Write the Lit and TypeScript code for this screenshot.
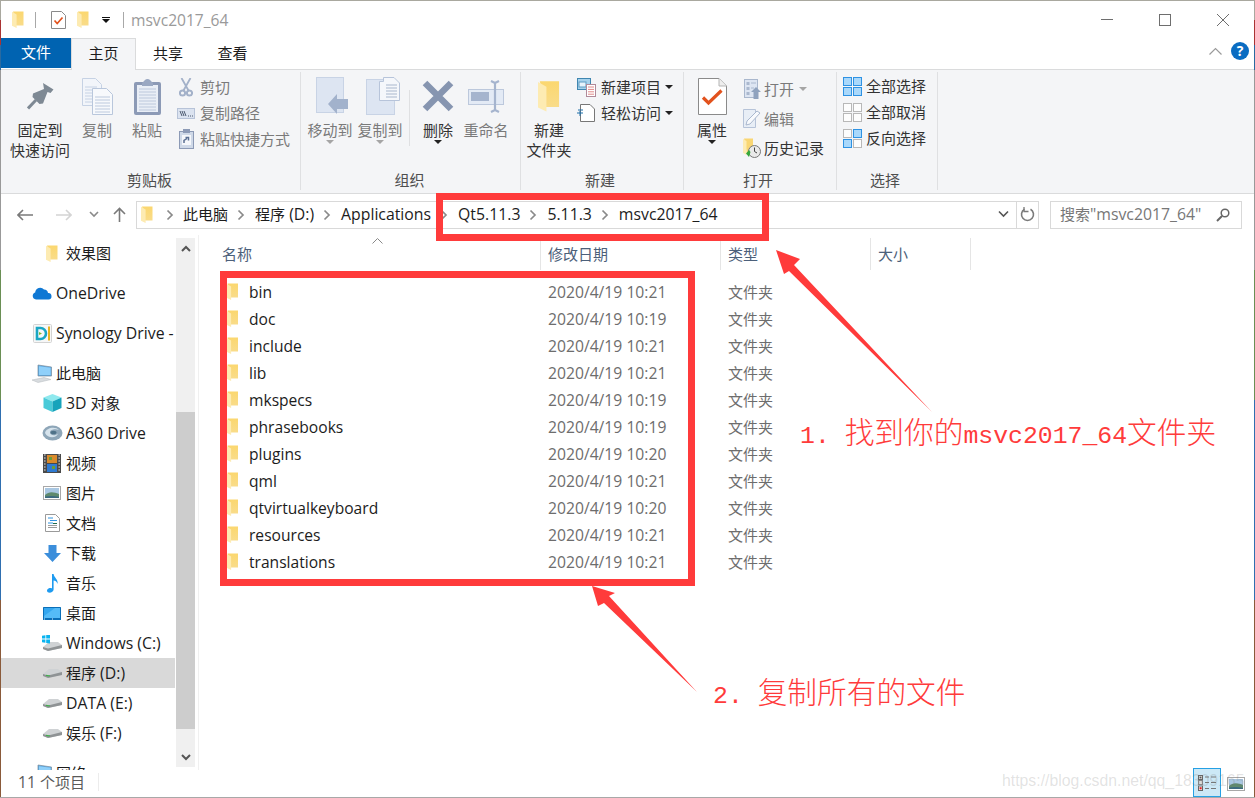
import { LitElement, html, css, svg, nothing } from "lit";
import { customElement } from "lit/decorators.js";

const tx = (s: string) =>
  s.split(/([\u3000-\u9fff]+)/).map((p, i) => (i % 2 ? html`<span class="c">${p}</span>` : p));

const folder = (w = 12, h = 17) => html`<svg width=${w} height=${h} viewBox="0 0 12 17">
  <defs><linearGradient id="fg" x1="0" y1="0" x2="0" y2="1"><stop offset="0" stop-color="#fbd76f"/><stop offset="1" stop-color="#f9dc8a"/></linearGradient></defs>
  <path d="M1 .5H11.5V14.5H4Z" fill="url(#fg)"/>
  <path d="M0 .8L4.6 3.4V17L0 14.8Z" fill="#fdebb2"/>
</svg>`;

const chk = html`<svg width="15" height="18" viewBox="0 0 15 18"><path d="M.5.5H10.5L14.5 4.5V17.5H.5Z" fill="#fff" stroke="#8a8a8a"/><path d="M3.5 9.5L6.2 12.5L11.5 6.5" fill="none" stroke="#e2521d" stroke-width="1.7"/></svg>`;

const docLines = (x: number, y: number, w: number, n: number, c: string, step = 3) =>
  Array.from({ length: n }, (_, i) => svg`<path d="M${x} ${y + i * step}h${w}" stroke=${c}/>`);

const I: Record<string, any> = {
  pin: html`<svg width="27" height="27" viewBox="0 0 27 27"><path d="M16 0L26.5 6.5L23.5 10L20.5 9L16 20.5L12.5 21L5.5 14L6 10.5L17 6Z" fill="#7e8994"/><path d="M9 17L1 25.5" stroke="#7e8994" stroke-width="3"/></svg>`,
  copy: html`<svg width="31" height="37" viewBox="0 0 31 37"><path d="M.5.5H13.5L19.5 6.5V27.5H.5Z" fill="#f2f5fa" stroke="#c6d2e4"/>${docLines(3, 9, 12, 6, "#c6d2e4")}<path d="M10.5 10.5H24.5L30.5 16.5V36.5H10.5Z" fill="#f7f9fc" stroke="#b9c7dc"/>${docLines(13, 19, 15, 6, "#bcc9dd")}</svg>`,
  paste: html`<svg width="27" height="37" viewBox="0 0 27 37"><rect x="0" y="4" width="27" height="33" rx="2" fill="#8c9ab6"/><rect x="3" y="7" width="21" height="27" fill="#e9eef6"/>${docLines(5, 11, 17, 8, "#bcc8dc")}<path d="M8 5L11 2A3 2 0 0 1 16 2L19 5V8H8Z" fill="#9aa8c2"/></svg>`,
  scissors: html`<svg width="14" height="19" viewBox="0 0 14 19" fill="none" stroke="#a3b1c9" stroke-width="1.8"><path d="M2.5 0L9.5 12.5M11.5 0L4.5 12.5"/><circle cx="3.5" cy="15" r="2.6" stroke-width="2"/><circle cx="10.5" cy="15" r="2.6" stroke-width="2"/></svg>`,
  cpath: html`<svg width="18" height="11" viewBox="0 0 18 11"><rect x=".5" y=".5" width="17" height="10" fill="#dbe3f0" stroke="#b7c3d8"/><path d="M3 3L5 8M5 3L7 8M7 3L9 8M11 8h1M13 8h1M15 8h1" stroke="#4c5a70" fill="none"/></svg>`,
  pshort: html`<svg width="15" height="20" viewBox="0 0 15 20"><rect x=".5" y="2.5" width="14" height="17" fill="#cfd9e8" stroke="#8c9ab6"/><rect x="4" y="0" width="7" height="4" fill="#8c9ab6"/><rect x="3" y="6" width="9" height="10" fill="#f5f7fb"/><path d="M5 14V11.5L8 9.5M6.5 8.5H9.5V11.5" fill="none" stroke="#5a6f93" stroke-width="1.5"/></svg>`,
  move: html`<svg width="37" height="38" viewBox="-4 0 37 38"><rect x=".5" y=".5" width="27" height="35" fill="#dde5f2" stroke="#c8d3e5"/><path d="M12 27L21 17V22H32V32H21V37Z" fill="#a2b2cc"/></svg>`,
  copyto: html`<svg width="40" height="39" viewBox="-6 0 40 39"><rect x=".5" y="2.5" width="28" height="35" fill="#dde5f2" stroke="#c8d3e5"/><path d="M13.5 4.5H17.5V.5H28L33.5 6V23.5H13.5Z" fill="#f5f7fb" stroke="#b7c4da"/>${docLines(20, 8, 11, 5, "#a9b7cd")}</svg>`,
  del: html`<svg width="32" height="32" viewBox="0 0 32 32"><path d="M3 3L29 29M29 3L3 29" stroke="#8695b0" stroke-width="6.5"/></svg>`,
  rename: html`<svg width="36" height="33" viewBox="0 0 36 33"><rect x=".5" y="9.5" width="35" height="15" fill="#e3eaf5" stroke="#bcc8dc"/><rect x="3" y="12" width="18" height="9" fill="#a5b4ce"/><path d="M23 1L27 3L31 1M27 3V30M23 32L27 30L31 32" fill="none" stroke="#a5b4ce" stroke-width="2.2"/></svg>`,
  newitem: html`<svg width="19" height="19" viewBox="0 0 19 19"><rect x=".5" y=".5" width="13" height="11" fill="#a6d2ec" stroke="#3f86b0"/><rect x="2" y="4" width="7" height="5" fill="#e7f3fb" stroke="#5d9cc2"/><rect x="9.5" y="6.5" width="9" height="12" fill="#fff" stroke="#b08a9a"/>${docLines(11, 9, 6, 4, "#e08a8a", 2.4)}</svg>`,
  easy: html`<svg width="18" height="18" viewBox="0 0 18 18"><path d="M3.5.5H13L17.5 5V17.5H3.5Z" fill="#fff" stroke="#777"/><path d="M1 6H6M0 9H6M3 7V12" stroke="#1f6fa8" fill="none"/></svg>`,
  props: html`<svg width="29" height="37" viewBox="0 0 29 37"><path d="M.5.5H21L28.5 8V36.5H.5Z" fill="#fff" stroke="#8a8a8a"/><path d="M21 .5V8H28.5" fill="#eee" stroke="#b5b5b5"/><path d="M5 19.5L10.5 25L23.5 12.5" fill="none" stroke="#e2521d" stroke-width="3.2"/></svg>`,
  open: html`<svg width="17" height="20" viewBox="0 0 17 20"><rect x=".5" y=".5" width="13" height="18" fill="#dde5f2" stroke="#a9b7cd"/><path d="M2.5 3h3v3h-3zM2.5 8h3v3h-3zM2.5 13h3v3h-3z" fill="#aab8ce"/><path d="M7 4h5M7 9h3" stroke="#aab8ce"/><path d="M12 8L17 13H14.5V20H9.5V13H7Z" fill="#8fa2be"/></svg>`,
  edit: html`<svg width="18" height="19" viewBox="0 0 18 19"><path d="M.5.5H12.5V18.5H.5Z" fill="#e8eef6" stroke="#b6c3d8"/><path d="M3 16L4 12L14 2L17 4L7 15Z" fill="#f8fafd" stroke="#aab8ce"/></svg>`,
  hist: html`<svg width="18" height="20" viewBox="0 0 18 20"><path d="M1 .5H10V16H4Z" fill="#f9d673"/><path d="M0 1L3.5 3V17L0 15Z" fill="#fdebb2"/><circle cx="11.5" cy="13.5" r="6" fill="#e9e9e9" stroke="#777"/><path d="M11.5 9.5V13.5L14 15" stroke="#444" fill="none"/><path d="M3 15.5L6 12L7.5 14L6 19Z" fill="#36a83a"/></svg>`,
  cloud: html`<svg width="20" height="14" viewBox="0 0 20 14"><path d="M4 13.5A3.6 3.6 0 0 1 3.2 6.5A5 5 0 0 1 12 3.5A4 4 0 0 1 16 7A3.2 3.2 0 0 1 16.5 13.5Z" fill="#0f78d4"/></svg>`,
  syn: html`<svg width="19" height="19" viewBox="0 0 19 19"><rect x=".5" y=".5" width="18" height="18" rx="1" fill="#f7f7f7" stroke="#d3d3d3"/><path d="M4 4H7.5A5.5 5.5 0 0 1 7.5 15H4Z" fill="none" stroke="#1aa7c4" stroke-width="2.6"/><path d="M6 8L9 9.5L6 11Z" fill="#7dbb2c"/><path d="M16 2.5V16.5" stroke="#e9b321" stroke-width="2"/></svg>`,
  pc: html`<svg width="20" height="19" viewBox="0 0 20 19"><path d="M6 1L19.5 3V12L6 12Z" fill="#5aa9e4" stroke="#7a8b9a" stroke-width=".7"/><path d="M7 2.2L18.6 3.8V11H7Z" fill="#8fd0fa"/><path d="M0 16L12 13.5L19 15.5L6 18.5Z" fill="#d8dcdf" stroke="#b3b8bc" stroke-width=".5"/></svg>`,
  cube: html`<svg width="19" height="18" viewBox="0 0 19 18"><path d="M9.5 0L18.5 3.5L9.5 7.5L.5 3.5Z" fill="#8fe9ee"/><path d="M.5 3.5L9.5 7.5V18L.5 14Z" fill="#49cad8"/><path d="M18.5 3.5V14L9.5 18V7.5Z" fill="#17a3bb"/></svg>`,
  a360: html`<svg width="21" height="16" viewBox="0 0 21 16"><ellipse cx="10.5" cy="8" rx="10" ry="7.5" fill="#8ea6b8"/><path d="M3 8C4 3 13 1 17 5C14 3.5 8 4 8 7.5C8 11 14 11 16 8.5C15 13 6 14 3 8Z" fill="#d6e3ec"/><ellipse cx="11.5" cy="7.5" rx="3" ry="1.8" fill="#4f7288"/></svg>`,
  video: html`<svg width="18" height="19" viewBox="0 0 18 19"><rect width="18" height="19" fill="#4a4a4a"/>${[1, 4, 7, 10, 13, 16].map((y) => svg`<path d="M1 ${y}h1.6M15.4 ${y}h1.6" stroke="#ddd"/>`)}<rect x="4" y="1" width="10" height="8" fill="#d98a2b"/><rect x="4" y="10" width="10" height="8" fill="#2f7ad1"/><path d="M6 3h3v3H6zM9 12h3v3H9z" fill="#6a9c3a"/></svg>`,
  pic: html`<svg width="18" height="14" viewBox="0 0 18 14"><rect x=".5" y=".5" width="17" height="13" fill="#fff" stroke="#a8a8a8"/><rect x="2" y="2" width="14" height="10" fill="#a9c7e2"/><path d="M2 9C6 5 11 6 16 8V12H2Z" fill="#5f8a6e"/><path d="M2 10.5C7 9.5 12 10 16 11V12H2Z" fill="#3c6a80"/></svg>`,
  docs: html`<svg width="15" height="18" viewBox="0 0 15 18"><path d="M.5.5H10.5L14.5 4.5V17.5H.5Z" fill="#fff" stroke="#9a9a9a"/><path d="M3 4H8M5 6.5H12M3 9H8" stroke="#2f93e0"/><path d="M3 11.5H12M3 13.5H12" stroke="#9a9a9a"/><path d="M8 9.5h4" stroke="#1c6b4a"/></svg>`,
  dl: html`<svg width="17" height="17" viewBox="0 0 17 17"><path d="M4.5 0H12.5V8H17L8.5 17L0 8H4.5Z" fill="#3b8edb"/></svg>`,
  music: html`<svg width="13" height="19" viewBox="0 0 13 19"><path d="M6 0H7.6C8 4 12.5 5 11.5 10C11 7.5 9 6.5 7.6 6.5V15.5C7.6 18 4.5 19 2.5 18.5C.5 18 .5 15.5 2.5 14.5C4 13.8 5.2 14 6 14.5Z" fill="#1e9bf0"/></svg>`,
  desk: html`<svg width="18" height="13" viewBox="0 0 18 13"><rect width="18" height="13" rx=".5" fill="#0b6fb8"/><path d="M1 1H17V11H1Z" fill="#35a7ef"/><path d="M1 9L12 1H17V11H1Z" fill="#55bbf7"/><path d="M1 12H17" stroke="#dff1fc" stroke-dasharray="1 7"/></svg>`,
  drive: html`<svg width="19" height="10" viewBox="0 0 19 10"><path d="M0 6L6 1H15L19 4V7L5 10L0 8Z" fill="#cfd2d4"/><path d="M0 6L5 7.5L19 4V7L5 10L0 8Z" fill="#8f9395"/><path d="M3 7.4L7 8" stroke="#3fb24a" stroke-width="1.2"/></svg>`,
  cdrive: html`<svg width="20" height="16" viewBox="0 0 20 16"><path d="M1 12L7 7H16L20 10V13L6 16L1 14Z" fill="#cfd2d4"/><path d="M1 12L6 13.5L20 10V13L6 16L1 14Z" fill="#8f9395"/><path d="M0 .8L3.4 .2V3.6H0ZM4.2 0L8 -.5V3.6H4.2ZM0 4.4H3.4V7.8L0 7.2ZM4.2 4.4H8V8.5L4.2 8Z" fill="#0ab4f0"/></svg>`,
  details: html`<svg width="18" height="16" viewBox="0 0 18 16"><rect x=".5" y=".5" width="4" height="4" fill="#fff" stroke="#666"/><rect x=".5" y="5.5" width="4" height="4" fill="#ddd" stroke="#888"/><rect x=".5" y="11" width="4" height="4.5" fill="#fff" stroke="#666"/><rect x="1.5" y="12.2" width="2.2" height="2.2" fill="#d22"/><rect x="1.5" y="1.5" width="2" height="2" fill="#555"/><path d="M7 2h4M13 2h5M7 7.5h4M13 7.5h5M7 13.5h4M13 13.5h5" stroke="#777"/></svg>`,
};

const squares = (on: boolean[]) => html`<svg width="19" height="19" viewBox="0 0 19 19">
  ${[[0, 0], [10, 0], [0, 10], [10, 10]].map(([x, y], i) => svg`<rect x=${x + 0.5} y=${y + 0.5} width="8" height="8" fill=${on[i] ? "#a9d8fb" : "#fdfdfd"} stroke=${on[i] ? "#2e92e3" : "#b8b8b8"}/>`)}
</svg>`;

const files: [string, string][] = [
  ["bin", "10:21"], ["doc", "10:19"], ["include", "10:21"], ["lib", "10:21"], ["mkspecs", "10:19"],
  ["phrasebooks", "10:19"], ["plugins", "10:20"], ["qml", "10:21"], ["qtvirtualkeyboard", "10:20"],
  ["resources", "10:21"], ["translations", "10:21"],
];

const nav: { t: string; i: any; l?: number; sel?: boolean; gap?: boolean }[] = [
  { t: "效果图", i: folder(12, 17), l: 2, gap: true },
  { t: "OneDrive", i: I.cloud, l: 1, gap: true },
  { t: "Synology Drive - ", i: I.syn, l: 1, gap: true },
  { t: "此电脑", i: I.pc, l: 1 },
  { t: "3D 对象", i: I.cube, l: 2 },
  { t: "A360 Drive", i: I.a360, l: 2 },
  { t: "视频", i: I.video, l: 2 },
  { t: "图片", i: I.pic, l: 2 },
  { t: "文档", i: I.docs, l: 2 },
  { t: "下载", i: I.dl, l: 2 },
  { t: "音乐", i: I.music, l: 2 },
  { t: "桌面", i: I.desk, l: 2 },
  { t: "Windows (C:)", i: I.cdrive, l: 2 },
  { t: "程序 (D:)", i: I.drive, l: 2, sel: true },
  { t: "DATA (E:)", i: I.drive, l: 2 },
  { t: "娱乐 (F:)", i: I.drive, l: 2, gap: true },
  { t: "网络", i: I.pc, l: 1 },
];

@customElement("app-root")
export class AppRoot extends LitElement {
  static styles = css`
    :host {
      display: block; width: 1255px; height: 798px; position: relative; overflow: hidden;
      background: linear-gradient(#a9a89f 0 20px, #a33 20px 45px, #2a6aa0 45px 70px, #999 70px 270px, #6a8f55 270px 400px, #2f6fb0 400px 600px, #8a5a3a 600px 797px, #a8a8a8 797px);
      font-family: "Open Sans", "Noto Sans CJK SC", sans-serif;
      font-size: 15.6px; color: #1c1c1c;
    }
    .c { font-size: 15px; font-family: "Noto Sans CJK SC", sans-serif; }
    svg { display: block; flex: none; }
    .win {
      margin: 1px 1px 1px 1px; height: 796px; background: #fff; display: flex; flex-direction: column;
      position: relative;
    }
    .title { height: 37px; display: flex; align-items: center; padding-left: 11px; flex: none; }
    .vsep { width: 1px; height: 16px; background: #a8a8a8; }
    .m11 { margin-left: 11px; } .m15 { margin-left: 15px; } .m12 { margin-left: 12px; } .m13 { margin-left: 13px; }
    .ttl { margin-left: 7px; color: #9a9a9a; line-height: 20px; }
    .ddq { width: 8px; margin-left: 13px; display: flex; flex-direction: column; gap: 1px; align-items: center; }
    .ddq i { display: block; width: 8px; height: 1px; background: #111; }
    .ddq b { display: block; border: 4px solid transparent; border-top-color: #111; border-bottom: 0; }
    .wc { margin-left: auto; display: flex; padding-right: 2px; }
    .wc div { width: 58px; height: 24px; display: flex; align-items: center; justify-content: center; }

    .tabs { height: 31px; display: flex; flex: none; align-items: flex-start; }
    .tab { width: 65px; height: 30px; line-height: 30px; text-align: center; color: #1c1c1c; }
    .tab.file { width: 70px; background: #0063b1; color: #fff; line-height: 28px; }
    .tab.home {
      height: 32px; line-height: 28px; background: #f4f5f7; border: 1px solid #dadbdc; border-bottom: 0;
      box-sizing: border-box; position: relative; z-index: 1;
    }
    .tab.sh { width: 64px; }
    .tabs .r { margin-left: auto; display: flex; align-items: center; gap: 9px; padding: 4px 5px 0 0; }
    .help { width: 18px; height: 18px; border-radius: 50%; background: #0a6cc2; color: #fff; font-size: 14px; font-weight: 700; line-height: 18px; text-align: center; }

    .ribbon {
      height: 125px; box-sizing: border-box; border-top: 1px solid #dadbdc; border-bottom: 1px solid #dadbdc;
      background: #f4f5f7; display: flex; padding: 2px 0 3px; flex: none;
    }
    .g { display: flex; flex-direction: column; border-right: 1px solid #dfe0e2; box-sizing: border-box; height: 118px; }
    .g1 { width: 300px; } .g2 { width: 220px; } .g3 { width: 163px; } .g4 { width: 153px; } .g5 { width: 101px; }
    .gc { flex: 1; display: flex; min-height: 0; }
    .gl { height: 20px; line-height: 20px; text-align: center; color: #4e4e4e; }
    .g1 .gl, .g2 .gl { padding-right: 2px; }
    .g3 .gl, .g4 .gl, .g5 .gl { padding-right: 4px; }
    .g1 .gc { padding-left: 9px; } .g2 .gc { padding-left: 4px; } .g3 .gc { padding-left: 3px; } .g4 .gc { padding-left: 4px; } .g5 .gc { padding-left: 6px; }
    .big { display: flex; flex-direction: column; align-items: center; color: #7a7a7a; text-align: center; line-height: 20px; flex: none; }
    .big.on, .sm.on { color: #333; }
    .big .ic { height: 48px; display: flex; align-items: center; justify-content: center; }
    .w60 { width: 60px; } .w54 { width: 54px; } .w46 { width: 46px; } .w50 { width: 50px; } .w48 { width: 48px; }
    .drop { border: 4px solid transparent; border-top-color: #222; border-bottom: 0; width: 0; }
    .drop.off { border-top-color: #a5a5a5; }
    .bsep { width: 1px; height: 56px; background: #dfe0e2; margin: 18px 5px 0 4px; flex: none; }
    .sc { display: flex; flex-direction: column; padding-top: 2px; flex: none; }
    .sc.p1 { padding-top: 1px; }
    .sc.p2 { padding-top: 2px; }
    .sm { display: flex; align-items: center; height: 26px; color: #7a7a7a; gap: 5px; }
    .sc.r30 .sm { height: 29.7px; }
    .smi { width: 18px; display: flex; justify-content: center; flex: none; }
    .x7 { margin-left: 7px; } .x3 { margin-left: 3px; }
    .sm.gap6 { gap: 6px; } .sm.gap3 { gap: 3px; }
    .sm.gap3 .drop { margin-left: 2px; }
    .sm.gap6 .drop { margin-left: -2px; }

    .addr { height: 41px; display: flex; align-items: center; flex: none; font-size: 15.8px; }
    .nb { display: flex; justify-content: center; align-items: center; height: 27px; }
    .n47 { width: 47px; } .n31 { width: 31px; } .n29 { width: 29px; } .n22 { width: 22px; margin-right: 6px; }
    .path {
      width: 880px; height: 28px; box-sizing: border-box; border: 1px solid #d9d9d9; border-right: 0;
      display: flex; align-items: center; padding-left: 4px; position: relative;
    }
    .path span, .search span { padding-bottom: 2px; }
    .chev { width: 8px; margin: 0 10px 0 9px; flex: none; }
    .chev.first { margin-left: 13px; margin-right: 9px; }
    .ddn { position: absolute; right: 7px; top: 8px; }
    .ref {
      width: 23px; height: 28px; box-sizing: border-box; border: 1px solid #d9d9d9;
      display: flex; align-items: center; justify-content: center;
    }
    .search {
      margin-left: 11px; width: 192px; height: 28px; box-sizing: border-box; border: 1px solid #d9d9d9;
      display: flex; align-items: center; justify-content: space-between; padding: 0 11px 0 9px; color: #777;
    }

    .body { flex: 1; display: flex; min-height: 0; }
    .side { width: 174px; padding-top: 3px; overflow: hidden; flex: none; box-sizing: border-box; font-size: 15.8px; }
    .nr { display: flex; align-items: center; height: 30px; white-space: nowrap; color: #1c1c1c; overflow: hidden; }
    .nr.l1 { padding-left: 31px; } .nr.l2 { padding-left: 41px; }
    .nr.gap { margin-bottom: 10px; }
    .nr.sel { background: #d9d9d9; }
    .nic { width: 20px; margin-right: 4px; display: flex; justify-content: center; flex: none; }
    .sb { width: 19px; margin: 3px 0 3px 1px; background: #f0f0f0; flex: none; display: flex; flex-direction: column; }
    .sb .a { height: 174px; display: flex; justify-content: center; padding-top: 7px; box-sizing: border-box; }
    .sb .t { height: 317px; background: #cdcdcd; flex: none; }
    .sb .b { flex: 1; display: flex; justify-content: center; align-items: flex-end; padding-bottom: 6px; }
    .main { margin-left: 3px; border-left: 1px solid #f0f0f0; flex: 1; padding-top: 3px; min-width: 0; }
    .hdr { display: flex; height: 32px; padding-left: 15px; color: #4c607a; line-height: 32px; }
    .hc { box-sizing: border-box; border-right: 1px solid #e5e5e5; padding-left: 7px; position: relative; flex: none; }
    .hc.n { width: 327px; padding-left: 8px; } .hc.d { width: 180px; } .hc.t { width: 150px; } .hc.s { width: 100px; }
    .caret { position: absolute; left: 50%; top: 0; margin-left: -5px; }
    .rows { margin-top: 8px; }
    .row { display: flex; height: 27px; align-items: center; padding-left: 27px; white-space: nowrap; }
    .fi { width: 23px; flex: none; }
    .fn { width: 299px; flex: none; }
    .fd { width: 180px; flex: none; color: #6d6d6d; font-size: 15.7px; }
    .ft { color: #6d6d6d; }

    .status { height: 27px; box-sizing: border-box; padding: 0 0 3px 17px; display: flex; align-items: center; flex: none; color: #5a5a5a; }
    .status .sp { width: 1px; height: 18px; background: #ececec; margin-left: 13px; }
    .vb { margin: 0 0 -3px auto; align-self: flex-end; width: 28px; height: 29px; box-sizing: border-box; background: #cce8f6; border: 1px solid #26a0e4; display: flex; align-items: center; justify-content: center; flex: none; }
    .vt { margin: 3px 9px 0 6px; flex: none; }

    .over { position: absolute; left: 0; top: 0; pointer-events: none; }
    .note { position: absolute; color: #ff3b3b; font-family: "Liberation Mono", monospace; font-size: 24.8px; line-height: 32px; white-space: pre; pointer-events: none; }
    .note .k { font-family: "Noto Sans CJK SC", sans-serif; font-size: 29.7px; font-weight: 300; }
    .n1 { left: 800px; top: 415px; }
    .n2 { left: 713px; top: 675px; }
    .wm { position: absolute; left: 1002px; top: 769px; font-family: "Liberation Sans", sans-serif; font-size: 15.8px; line-height: 24px; color: rgba(110, 110, 110, .2); white-space: nowrap; pointer-events: none; }
  `;

  private big(label: any, icon: any, w: string, on = false, drop: string = "") {
    return html`<div class="big ${w} ${on ? "on" : ""}">
      <div class="ic">${icon}</div>
      <div>${label}</div>
      ${drop ? html`<div class="drop ${drop === "off" ? "off" : ""}"></div>` : nothing}
    </div>`;
  }

  private small(label: string, icon: any, on = false, extra: any = nothing, cls = "") {
    return html`<div class="sm ${on ? "on" : ""} ${cls}"><div class="smi">${icon}</div><span>${tx(label)}</span>${extra}</div>`;
  }

  private chev(first = false) {
    return html`<svg class="chev ${first ? "first" : ""}" width="8" height="12" viewBox="0 0 8 12"><path d="M1.5 1.5L6 6L1.5 10.5" fill="none" stroke="#8a8a8a" stroke-width="1.7"/></svg>`;
  }

  render() {
    return html`
      <div class="win">
        <div class="title">
          ${folder(12, 17)}
          <div class="vsep m11"></div>
          <div class="m15">${chk}</div>
          <div class="m11">${folder(12, 17)}</div>
          <div class="ddq"><i></i><b></b></div>
          <div class="vsep m13"></div>
          <div class="ttl">msvc2017_64</div>
          <div class="wc">
            <div><svg width="12" height="1" viewBox="0 0 12 1"><path d="M0 .5H12" stroke="#6e6e6e"/></svg></div>
            <div><svg width="12" height="12" viewBox="0 0 12 12"><rect x=".5" y=".5" width="11" height="11" fill="none" stroke="#6e6e6e"/></svg></div>
            <div><svg width="12" height="12" viewBox="0 0 12 12"><path d="M0 0L12 12M12 0L0 12" stroke="#6e6e6e"/></svg></div>
          </div>
        </div>

        <div class="tabs">
          <div class="tab file">${tx("文件")}</div>
          <div class="tab home">${tx("主页")}</div>
          <div class="tab sh">${tx("共享")}</div>
          <div class="tab">${tx("查看")}</div>
          <div class="r">
            <svg width="13" height="8" viewBox="0 0 13 8"><path d="M.5 7.5L6.5 1.5L12.5 7.5" fill="none" stroke="#9a9a9a" stroke-width="1.2"/></svg>
            <div class="help">?</div>
          </div>
        </div>

        <div class="ribbon">
          <div class="g g1">
            <div class="gc">
              ${this.big(html`${tx("固定到")}<br />${tx("快速访问")}`, I.pin, "w60", true)}
              ${this.big(tx("复制"), I.copy, "w54")}
              ${this.big(tx("粘贴"), I.paste, "w46")}
              <div class="sc x7">
                ${this.small("剪切", I.scissors)}
                ${this.small("复制路径", I.cpath)}
                ${this.small("粘贴快捷方式", I.pshort)}
              </div>
            </div>
            <div class="gl">${tx("剪贴板")}</div>
          </div>
          <div class="g g2">
            <div class="gc">
              ${this.big(tx("移动到"), I.move, "w50", false, "off")}
              ${this.big(tx("复制到"), I.copyto, "w50", false, "off")}
              <div class="bsep"></div>
              ${this.big(tx("删除"), I.del, "w46", true, "on")}
              ${this.big(tx("重命名"), I.rename, "w50")}
            </div>
            <div class="gl">${tx("组织")}</div>
          </div>
          <div class="g g3">
            <div class="gc">
              ${this.big(html`${tx("新建")}<br />${tx("文件夹")}`, folder(22, 36), "w50", true)}
              <div class="sc x3">
                ${this.small("新建项目", I.newitem, true, html`<div class="drop"></div>`, "gap6")}
                ${this.small("轻松访问", I.easy, true, html`<div class="drop"></div>`, "gap6")}
              </div>
            </div>
            <div class="gl">${tx("新建")}</div>
          </div>
          <div class="g g4">
            <div class="gc">
              ${this.big(tx("属性"), I.props, "w48", true, "on")}
              <div class="sc p2 r30 x7">
                ${this.small("打开", I.open, false, html`<div class="drop off"></div>`, "gap3")}
                ${this.small("编辑", I.edit, false, nothing, "gap3")}
                ${this.small("历史记录", I.hist, true, nothing, "gap3")}
              </div>
            </div>
            <div class="gl">${tx("打开")}</div>
          </div>
          <div class="g g5">
            <div class="gc">
              <div class="sc p1">
                ${this.small("全部选择", squares([true, true, true, true]), true)}
                ${this.small("全部取消", squares([false, false, false, false]), true)}
                ${this.small("反向选择", squares([false, true, true, false]), true)}
              </div>
            </div>
            <div class="gl">${tx("选择")}</div>
          </div>
        </div>

        <div class="addr">
          <div class="nb n47"><svg width="16" height="12" viewBox="0 0 16 12"><path d="M6 1L1 6L6 11M1 6H16" fill="none" stroke="#7a7a7a" stroke-width="1.6"/></svg></div>
          <div class="nb n31"><svg width="16" height="12" viewBox="0 0 16 12"><path d="M10 1L15 6L10 11M0 6H15" fill="none" stroke="#d4d4d4" stroke-width="1.6"/></svg></div>
          <div class="nb n29"><svg width="10" height="7" viewBox="0 0 10 7"><path d="M1 1L5 5L9 1" fill="none" stroke="#8a8a8a" stroke-width="1.6"/></svg></div>
          <div class="nb n22"><svg width="13" height="15" viewBox="0 0 13 15"><path d="M1 7L6.5 1.5L12 7M6.5 1.5V15" fill="none" stroke="#7a7a7a" stroke-width="1.6"/></svg></div>
          <div class="path">
            ${folder(12, 17)}
            ${this.chev(true)}<span>${tx("此电脑")}</span>
            ${this.chev()}<span>${tx("程序 (D:)")}</span>
            ${this.chev()}<span>Applications</span>
            ${this.chev()}<span>Qt5.11.3</span>
            ${this.chev()}<span>5.11.3</span>
            ${this.chev()}<span>msvc2017_64</span>
            <svg class="ddn" width="11" height="8" viewBox="0 0 11 8"><path d="M1 1.5L5.5 6L10 1.5" fill="none" stroke="#555" stroke-width="1.6"/></svg>
          </div>
          <div class="ref"><svg width="15" height="15" viewBox="0 0 15 15"><path d="M10.5 2.3A6 6 0 1 1 4.5 2.3" fill="none" stroke="#7a7a7a" stroke-width="1.6"/><path d="M4 0V4.5H8.5" fill="none" stroke="#7a7a7a" stroke-width="1.3"/></svg></div>
          <div class="search"><span>${tx('搜索"msvc2017_64"')}</span>
            <svg width="14" height="14" viewBox="0 0 14 14"><circle cx="9" cy="5" r="3.8" fill="none" stroke="#666" stroke-width="1.5"/><path d="M6 8L1 13" stroke="#666" stroke-width="2"/></svg>
          </div>
        </div>

        <div class="body">
          <div class="side">
            ${nav.map((n) => html`<div class="nr l${n.l} ${n.sel ? "sel" : ""} ${n.gap ? "gap" : ""}"><div class="nic">${n.i}</div><span>${tx(n.t)}</span></div>`)}
          </div>
          <div class="sb">
            <div class="a"><svg width="10" height="7" viewBox="0 0 10 7"><path d="M1 6L5 2L9 6" fill="none" stroke="#555" stroke-width="2"/></svg></div>
            <div class="t"></div>
            <div class="b"><svg width="10" height="7" viewBox="0 0 10 7"><path d="M1 1L5 5L9 1" fill="none" stroke="#555" stroke-width="2"/></svg></div>
          </div>
          <div class="main">
            <div class="hdr">
              <div class="hc n">${tx("名称")}<svg class="caret" width="11" height="6" viewBox="0 0 11 6"><path d="M.5 5.5L5.5 .5L10.5 5.5" fill="none" stroke="#888"/></svg></div>
              <div class="hc d">${tx("修改日期")}</div>
              <div class="hc t">${tx("类型")}</div>
              <div class="hc s">${tx("大小")}</div>
            </div>
            <div class="rows">
              ${files.map(([f, t]) => html`<div class="row"><div class="fi">${folder(13, 17)}</div><div class="fn">${f}</div><div class="fd">2020/4/19 ${t}</div><div class="ft">${tx("文件夹")}</div></div>`)}
            </div>
          </div>
        </div>

        <div class="status">
          <span>${tx("11 个项目")}</span><div class="sp"></div>
          <div class="vb">${I.details}</div>
          <div class="vt">${I.pic}</div>
        </div>
      </div>

      <svg class="over" width="1255" height="798" viewBox="0 0 1255 798">
        <g fill="none" stroke="#ff3b3b" stroke-width="7">
          <rect x="439.5" y="196.5" width="326" height="41"/>
          <rect x="223.5" y="274.5" width="468" height="308"/>
        </g>
        <g fill="#ff3b3b">
          <path d="M776 250L800 259L794 265L932 412L789 271L784 274Z"/>
          <path d="M592 586L615 593L609 596L697 692L604 603L598 606Z"/>
        </g>
      </svg>
      <div class="note n1">1. <span class="k">找到你的</span>msvc2017_64<span class="k">文件夹</span></div>
      <div class="note n2">2. <span class="k">复制所有的文件</span></div>
      <div class="wm">https://blog.csdn.net/qq_18309165</div>
    `;
  }
}
